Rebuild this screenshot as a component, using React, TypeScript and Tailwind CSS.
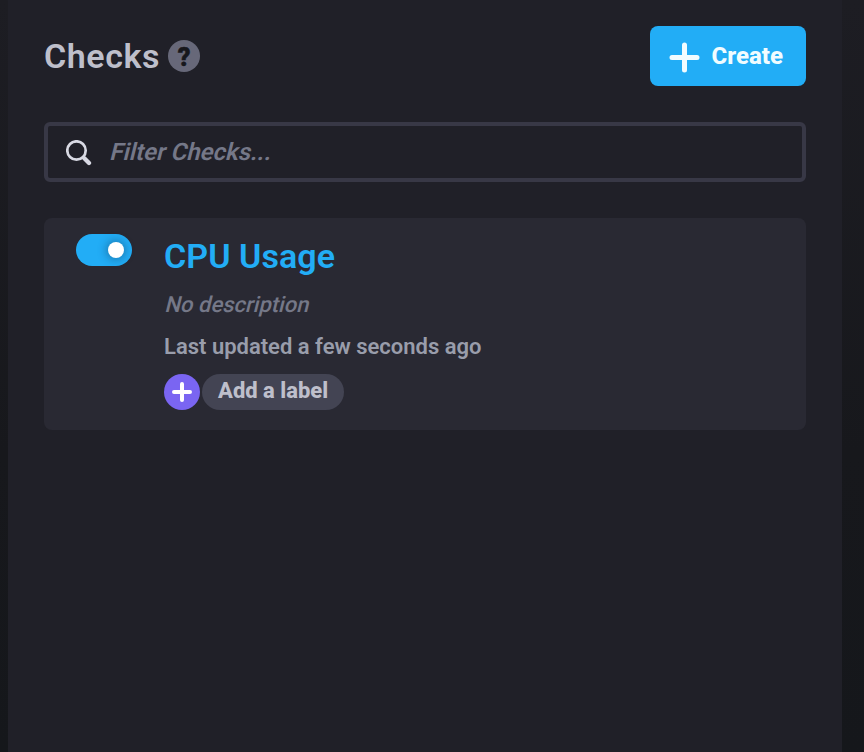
import React from "react";

function Plus({ size, stroke }: { size: number; stroke: number }) {
  const h = stroke / 2;
  return (
    <svg width={size} height={size} viewBox={`0 0 ${size} ${size}`} className="shrink-0" fill="none" stroke="currentColor" strokeWidth={stroke} strokeLinecap="round">
      <path d={`M${size / 2} ${h}V${size - h}M${h} ${size / 2}H${size - h}`} />
    </svg>
  );
}

export default function App() {
  return (
    <div className="h-[752px] w-[864px] overflow-hidden bg-linear-to-b from-[#1d1d23] from-0% via-[#17181c] via-60% to-[#15171b] pr-[22px] pl-2 font-['Roboto',sans-serif]">
      <main className="h-full bg-[#202028] pt-[26px] pr-9 pl-9">
        <header className="flex h-[60px] items-center justify-between">
          <div className="flex items-center">
            <h1 className="w-[124px] text-[34px] leading-[60px] font-semibold tracking-[0.55px] whitespace-nowrap text-[#bebfcb]">Checks</h1>
            <span className="flex size-8 items-center justify-center rounded-full bg-[#676879] text-[25px] leading-8 font-black text-[#17171c]"><span className="mt-1 [-webkit-text-stroke:0.5px_#17171c]">?</span></span>
          </div>
          <button className="flex h-[60px] w-[156px] items-center rounded-lg bg-[#22adf6] pl-[19px] text-[#f1fcff]">
            <svg width="31" height="31" viewBox="0 0 31 31" className="mt-[3px] shrink-0" fill="none" stroke="currentColor" strokeWidth="5" strokeLinecap="round">
              <path d="M15.500 3v25M3 15.500h25" />
            </svg>
            <span className="ml-[11.5px] text-[24px] leading-[60px] font-extrabold whitespace-nowrap">Create</span>
          </button>
        </header>

        <div className="mt-9 flex h-[60px] items-center rounded-md border-4 border-[#383846] pl-[18px]">
          <svg width="26" height="26" viewBox="0 0 26 26" fill="none" stroke="#d8d9e3" className="mt-0.5 shrink-0">
            <circle cx="10.500" cy="10.500" r="9.200" strokeWidth="2.700" />
            <path d="M17 17l1.500 1.500" strokeWidth="3" />
            <path d="M18.300 18.300l4.700 4.700" strokeWidth="4.300" strokeLinecap="round" />
          </svg>
          <span className="ml-[18.5px] inline-block -skew-x-[14deg] text-[24px] leading-[52px] font-semibold whitespace-nowrap text-[#757888]">Filter Checks...</span>
        </div>

        <section className="mt-9 flex h-[212px] rounded-lg bg-[#292933] pt-4 pl-8">
          <div className="flex h-8 w-14 shrink-0 items-center justify-end rounded-full bg-[#22adf6] pr-2">
            <span className="size-4 rounded-full bg-white shadow-[0_0_8px_2px_rgba(20,50,80,0.4)]" />
          </div>
          <div className="ml-8">
            <h2 className="mt-0.5 text-[34px] leading-[40px] font-semibold tracking-[0.05px] whitespace-nowrap text-[#22adf6]">CPU Usage</h2>
            <p className="mt-[15px] ml-[1.5px] w-fit -skew-x-[14deg] text-[22px] leading-[28px] font-medium whitespace-nowrap text-[#757888]">No description</p>
            <p className="mt-[14px] text-[22px] leading-[28px] font-semibold whitespace-nowrap text-[#999dab]">Last updated a few seconds ago</p>
            <div className="mt-[13px] flex gap-0.5">
              <span className="flex size-9 items-center justify-center rounded-full bg-[#7a65f2] text-white"><Plus size={20} stroke={4} /></span>
              <span className="h-9 w-[142px] rounded-full bg-[#434453] pl-4 text-[22px] leading-[34px] font-extrabold whitespace-nowrap text-[#bebfcb]">Add a label</span>
            </div>
          </div>
        </section>
      </main>
    </div>
  );
}
